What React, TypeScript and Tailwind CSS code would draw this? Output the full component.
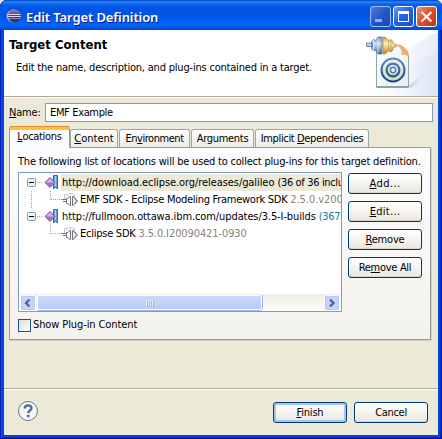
import type { ReactNode } from "react";

function Text({ children, className = "" }: { children: ReactNode; className?: string }) {
  return <span className={`block whitespace-pre leading-[14px] ${className}`}>{children}</span>;
}

function Key({ children }: { children: ReactNode }) {
  return <span className="underline decoration-1 underline-offset-1">{children}</span>;
}

function EclipseIcon() {
  return (
    <svg className="h-4 w-4" viewBox="0 0 16 16">
      <defs>
        <linearGradient id="ecl" x1="0" y1="0" x2="0" y2="1">
          <stop offset="0" stopColor="#8a86b8" />
          <stop offset=".45" stopColor="#4a4088" />
          <stop offset="1" stopColor="#332a6c" />
        </linearGradient>
      </defs>
      <ellipse cx="7.500" cy="8" rx="7" ry="6.500" fill="#b9a9c2" />
      <circle cx="8.500" cy="8" r="6.500" fill="url(#ecl)" />
      <path d="M1.500 6.500h13M1.300 8.500h13.600" stroke="#dcd6ea" strokeWidth="1" />
      <path d="M2 10.500h12" stroke="#8d84b4" strokeWidth="1" />
    </svg>
  );
}

function TargetBanner() {
  return (
    <svg className="h-[66px] w-[78px]" viewBox="0 0 78 66">
      <defs>
        <linearGradient id="swoosh" x1="0" y1="0" x2="1" y2="0">
          <stop offset="0" stopColor="#fff" />
          <stop offset=".55" stopColor="#edf2fb" />
          <stop offset="1" stopColor="#dce5f5" />
        </linearGradient>
        <linearGradient id="swoosh2" x1="0" y1="0" x2="1" y2="0">
          <stop offset="0" stopColor="#fff" />
          <stop offset=".65" stopColor="#f1f4fb" />
          <stop offset="1" stopColor="#e6ecf8" />
        </linearGradient>
        <linearGradient id="page" x1="0" y1="0" x2="1" y2="1">
          <stop offset="0" stopColor="#fff" />
          <stop offset="1" stopColor="#e6edf3" />
        </linearGradient>
        <linearGradient id="fold" x1="1" y1="0" x2="0" y2="1">
          <stop offset="0" stopColor="#e8893f" />
          <stop offset="1" stopColor="#fbd7a5" />
        </linearGradient>
        <linearGradient id="ring" x1="0" y1="0" x2="0" y2="1">
          <stop offset="0" stopColor="#5f8bc0" />
          <stop offset="1" stopColor="#163c8e" />
        </linearGradient>
        <linearGradient id="inner" x1="0" y1="0" x2="0" y2="1">
          <stop offset="0" stopColor="#e9f1f1" />
          <stop offset="1" stopColor="#d1dfb6" />
        </linearGradient>
        <linearGradient id="plugBlue" x1="0" y1="0" x2="0" y2="1">
          <stop offset="0" stopColor="#7395bb" />
          <stop offset=".4" stopColor="#d1e0ef" />
          <stop offset="1" stopColor="#39679d" />
        </linearGradient>
        <linearGradient id="plugGold" x1="0" y1="0" x2="0" y2="1">
          <stop offset="0" stopColor="#c9a343" />
          <stop offset=".4" stopColor="#fff2bd" />
          <stop offset="1" stopColor="#be7e24" />
        </linearGradient>
        <linearGradient id="pageShadow" x1="0" y1="0" x2="1" y2="0">
          <stop offset="0" stopColor="#c9c8d2" />
          <stop offset="1" stopColor="#e7ecf7" stopOpacity="0" />
        </linearGradient>
      </defs>
      <path d="M78 2C58 9 42 24 12 66h66z" fill="url(#swoosh2)" />
      <path d="M78 22C58 27 44 40 23 66h55z" fill="url(#swoosh)" />
      <path d="M48 57l21-20-3 10-15 11z" fill="url(#pageShadow)" />
      <path d="M16.500 15.500H38l10.500 10V57h-32z" fill="url(#page)" stroke="#8ba6a8" />
      <path d="M16.500 57h32" stroke="#547878" />
      <path d="M38 14.500c5 1 11 6 10.500 12-2-2-4-2.500-7-2C43 20 41 16 38 14.500z" fill="url(#fold)" stroke="#e69c56" strokeWidth=".6" />
      <circle cx="33" cy="40" r="12.500" fill="url(#ring)" />
      <circle cx="33" cy="40" r="9" fill="none" stroke="url(#inner)" strokeWidth="3" />
      <circle cx="33" cy="40" r="5.300" fill="url(#inner)" />
      <circle cx="33" cy="40" r="3.400" fill="#507cae" />
      <circle cx="33" cy="40" r="1.900" fill="#f6f8d8" />
      <path d="M6.500 13h6v3.500h-6zM11.500 12l2-2.500 2 1 2.500-3.500h4v17h-4L15.500 20l-2 1-2-2.500z" fill="url(#plugBlue)" stroke="#52779f" strokeWidth=".8" />
      <path d="M23 7h2l3.500 3.500 2.500-1 2 2v2.500h3v3h-3V20l-2 2-2.500-1L25 24h-2z" fill="url(#plugGold)" stroke="#b68a32" strokeWidth=".8" />
      <path d="M13.500 10v11M18 8v15" stroke="#eef7ff" strokeWidth=".7" />
      <path d="M28.500 11v9M31 10v11" stroke="#c69640" strokeWidth=".7" />
    </svg>
  );
}

function WindowControls() {
  return (
    <svg className="h-[21px] w-[67px]" viewBox="0 0 67 21">
      <defs>
        <linearGradient id="minBtn" x1="0" y1="0" x2="1" y2="1">
          <stop offset="0" stopColor="#557ee0" />
          <stop offset=".5" stopColor="#2457c9" />
          <stop offset="1" stopColor="#1848b0" />
        </linearGradient>
        <linearGradient id="maxBtn" x1="0" y1="0" x2="1" y2="1">
          <stop offset="0" stopColor="#719cf5" />
          <stop offset=".45" stopColor="#2663e4" />
          <stop offset="1" stopColor="#154fc4" />
        </linearGradient>
        <linearGradient id="closeBtn" x1="0" y1="0" x2="1" y2="1">
          <stop offset="0" stopColor="#ee9277" />
          <stop offset=".45" stopColor="#df5432" />
          <stop offset="1" stopColor="#b7320e" />
        </linearGradient>
      </defs>
      <rect x=".5" y=".5" width="20" height="20" rx="2.500" fill="url(#minBtn)" stroke="#9ebbf3" />
      <rect x="5" y="13" width="7" height="3" fill="#94aae7" />
      <rect x="23.500" y=".5" width="20" height="20" rx="2.500" fill="url(#maxBtn)" stroke="#fff" />
      <path d="M28 5h11v11H28zM29 8v7h9V8z" fill="#fff" fillRule="evenodd" />
      <rect x="46.500" y=".5" width="20" height="20" rx="2.500" fill="url(#closeBtn)" stroke="#fff" />
      <path d="M51.500 6l10 9.500M61.500 6l-10 9.500" stroke="#fff" strokeWidth="2.200" />
    </svg>
  );
}

function SiteIcon() {
  return (
    <svg className="h-[17px] w-4 shrink-0" viewBox="0 0 16 17">
      <path d="M9.500 1.500h4V15l-2-2-2 2z" fill="#62a2d7" stroke="#246fae" />
      <path d="M11.500 2v10" stroke="#a7d5f3" />
      <path d="M6 3.500l5 5-5 5-5-5z" fill="#a475ba" stroke="#8054a0" />
      <path d="M6 4.500l4 4H2z" fill="#d3b4e0" />
    </svg>
  );
}

function FeatureIcon() {
  return (
    <svg className="h-[17px] w-4 shrink-0" viewBox="0 0 16 17">
      <path d="M2.500 8V3.500h3l1-1h4l1 1h1V7" fill="#f5f6f9" stroke="#c5c8d0" />
      <path d="M0 8.500h4.500M1 10.500h3" stroke="#73777d" />
      <path d="M4.500 7.500h1.500l1.500-2h1v9h-1L6 12.500H4.500z" fill="#fff" stroke="#707479" />
      <path d="M10.500 5.500h1l1 2h1v1.500h1.500v2h-1.500v1.500h-1l-1 2h-1z" fill="#eeeff0" stroke="#707479" />
    </svg>
  );
}

function Expander() {
  return (
    <svg className="h-[17px] w-[9px] shrink-0" viewBox="0 0 9 17">
      <rect x=".5" y="4.500" width="8" height="8" rx="1" fill="#f2f1ea" stroke="#7898b5" />
      <path d="M2 8.500h5" stroke="#000" />
    </svg>
  );
}

function SiteRow({ selected = false, children }: { selected?: boolean; children: ReactNode }) {
  return (
    <div className="flex h-[17px] items-center pl-[7px]">
      <Expander />
      <span className="mr-0.5 ml-px h-px w-[5px] shrink-0 border-t border-dotted border-[#aaa795]" />
      <SiteIcon />
      <div className={`ml-px flex h-[17px] flex-1 items-center pl-px ${selected ? "bg-[#ece9d8]" : ""}`}>{children}</div>
    </div>
  );
}

function FeatureRow({ line = false, children }: { line?: boolean; children: ReactNode }) {
  return (
    <div className="flex h-[17px] pl-[11px]">
      <span className={`h-[17px] w-[19px] shrink-0 border-l border-dotted ${line ? "border-[#aaa795]" : "border-transparent"}`} />
      <span className="h-[9px] w-3 shrink-0 border-b border-l border-dotted border-[#aaa795]" />
      <FeatureIcon />
      <div className="ml-0.5 flex items-center">{children}</div>
    </div>
  );
}

function Button({ children, focused = false }: { children: ReactNode; focused?: boolean }) {
  return (
    <button
      className={`flex h-[21px] w-[74px] items-center justify-center rounded-[3px] border border-[#003c74] bg-linear-to-b from-white via-[#f5f4ef] to-[#e9e7df] ${
        focused ? "shadow-[inset_0_0_0_2px_#a9c3ef,inset_0_-2px_0_0_#7b9ce0]" : "shadow-[inset_0_-1px_0_#d8d2c4]"
      }`}
    >
      {children}
    </button>
  );
}

function Tab({ width, children }: { width: string; children: ReactNode }) {
  return (
    <div className={`flex h-[18px] justify-center rounded-t-[3px] border border-b-0 border-[#91a7b4] bg-linear-to-b from-white to-[#ecebe5] pt-0.5 ${width}`}>
      {children}
    </div>
  );
}

function ScrollArrow({ right = false }: { right?: boolean }) {
  return (
    <svg className="h-[16px] w-[16px] shrink-0" viewBox="0 0 16 16">
      <rect x=".5" y=".5" width="15" height="15" rx="2" fill="#c3d3fd" stroke="#fff" />
      <rect x="1.500" y="1.500" width="13" height="13" rx="1" fill="none" stroke="#b4c8f6" />
      <path d={right ? "M6 4.500L9.500 8 6 11.500" : "M9.500 4.500L6 8l3.500 3.500"} fill="none" stroke="#4d6185" strokeWidth="2.200" />
    </svg>
  );
}

function Scrollbar() {
  return (
    <div className="flex h-[17px] bg-linear-to-b from-[#eeede5] to-[#fefefb] pt-px">
      <ScrollArrow />
      <div className="ml-px flex h-[15px] w-[225px] items-center justify-center gap-px rounded-[2px] border border-white bg-linear-to-b from-[#c9d8fc] to-[#b9cdfb] shadow-[0_1px_0_#9eb6e5,1px_0_0_#9eb6e5]">
        {[0, 1, 2, 3].map((n) => (
          <span key={n} className="h-1.5 w-px bg-[#eef4fe] shadow-[1px_1px_0_#8cb0f8]" />
        ))}
      </div>
      <span className="flex-1" />
      <ScrollArrow right />
    </div>
  );
}

export default function App() {
  return (
    <div className="h-[439px] w-[442px] bg-[#ece9d8] font-['DejaVu_Sans_Condensed','DejaVu_Sans',sans-serif] text-[11px] text-black [font-stretch:condensed]">
      <div className="flex h-[439px] flex-col overflow-hidden rounded-t-[7px] bg-[#0046e0] shadow-[inset_1px_0_0_#001fb8,inset_-1px_0_0_#00138c,inset_0_-1px_0_#00138c,inset_2px_0_0_#0a50e8,inset_-2px_0_0_#0030c0,inset_0_-2px_0_#0030c0]">
        <header className="flex h-[30px] shrink-0 items-start bg-[linear-gradient(#0045c8_0,#2b84f8_2px,#0964ec_4px,#0054e3_8px,#0055e5_15px,#0064fa_23px,#0060f4_26px,#0046cc_30px)] pt-1.5 pr-[5px] pl-1.5">
          <div className="pt-[2px]"><EclipseIcon /></div>
          <h1 className="ml-1 flex-1 whitespace-pre font-[Noto_Sans] text-[13px] leading-[22px] font-semibold tracking-[-0.1px] text-white [text-shadow:1px_1px_#0a1883]">Edit Target Definition</h1>
          <WindowControls />
        </header>
        <main className="mx-1 mb-1 flex flex-1 flex-col bg-[#ece9d8]">
          <section className="flex h-[66px] shrink-0 bg-white">
            <div className="flex-1 pl-[5px]">
              <Text className="pt-2 text-[13px] font-bold">Target Content</Text>
              <Text className="pt-[9px] pl-[7px] tracking-[-0.2px]">Edit the name, description, and plug-ins contained in a target.</Text>
            </div>
            <TargetBanner />
          </section>
          <div className="h-0.5 shrink-0 border-t border-[#aca899] bg-white" />
          <div className="flex items-center pt-[5px] pl-[5px]">
            <Text className="w-9 tracking-[-0.2px]"><Key>N</Key>ame:</Text>
            <div className="flex h-[19px] w-[388px] items-center border border-[#7f9db9] bg-white pl-1">
              <Text className="tracking-[-0.35px]">EMF Example</Text>
            </div>
          </div>
          <div className="mt-[5px] flex h-5 items-end pl-[5px]">
            <div className="z-10 -mb-px flex h-[21px] w-[61px] justify-center rounded-t-[3px] border-x border-t-[3px] border-x-[#919b9c] border-t-[#ffc03c] bg-[#fcfcfe] shadow-[0_-1px_0_#e68b2c]">
              <Text className="tracking-[-0.3px]"><Key>L</Key>ocations</Text>
            </div>
            <Tab width="w-[48px]"><Text><Key>C</Key>ontent</Text></Tab>
            <Tab width="ml-px w-[71px]"><Text className="tracking-[-0.45px]">En<Key>v</Key>ironment</Text></Tab>
            <Tab width="ml-px w-[63px]"><Text className="tracking-[-0.3px]">Ar<Key>g</Key>uments</Text></Tab>
            <Tab width="ml-px w-[114px]"><Text className="tracking-[-0.36px]">Implicit <Key>D</Key>ependencies</Text></Tab>
          </div>
          <section className="ml-[5px] flex h-[193px] w-[422px] flex-col border border-[#919b9c] bg-linear-to-b from-[#fcfcfe] to-[#f3f2ed] px-2 shadow-[1px_1px_0_#d0cebf]">
            <Text className="pt-[7px] tracking-[-0.2px]">The following list of locations will be used to collect plug-ins for this target definition.</Text>
            <div className="mt-[3px] flex gap-1.5">
              <div className="flex h-[140px] w-[325px] flex-col overflow-hidden border border-[#7f9db9] bg-white px-px pt-px">
                <div className="flex-1">
                  <SiteRow selected><Text className="w-[280px] overflow-hidden tracking-[-0.08px]">http://download.eclipse.org/releases/galileo <span className="tracking-[-0.35px]">(36 of 36 inclu</span></Text></SiteRow>
                  <FeatureRow line><Text className="w-[261px] overflow-hidden tracking-[-0.27px]">EMF SDK - Eclipse Modeling Framework SDK <span className="tracking-[-0.05px] text-[#85827b]">2.5.0.v200</span></Text></FeatureRow>
                  <SiteRow><Text className="tracking-[-0.1px]">http://fullmoon.ottawa.ibm.com/updates/3.5-I-builds <span className="tracking-[-0.3px] text-[#127a9d]">(367</span></Text></SiteRow>
                  <FeatureRow><Text className="tracking-[-0.25px]">Eclipse SDK <span className="tracking-[-0.1px] text-[#85827b]">3.5.0.I20090421-0930</span></Text></FeatureRow>
                </div>
                <Scrollbar />
              </div>
              <div className="flex flex-col gap-[7px] pt-px">
                <Button><Text className="tracking-[0.4px]"><Key>A</Key>dd...</Text></Button>
                <Button><Text className="tracking-[0.3px]"><Key>E</Key>dit...</Text></Button>
                <Button><Text className="tracking-[-0.2px]"><Key>R</Key>emove</Text></Button>
                <Button><Text className="tracking-[-0.3px]">Re<Key>m</Key>ove All</Text></Button>
              </div>
            </div>
            <label className="mt-1.5 flex items-center gap-0.5">
              <span className="h-[13px] w-[13px] border border-[#1c5180] bg-linear-to-br from-[#dcdcd7] to-white" />
              <Text className="tracking-[-0.1px]">Show Plug-in Content</Text>
            </label>
          </section>
          <div className="mt-12 h-0.5 border-t border-[#aca899] bg-white" />
          <footer className="flex items-start pt-[10px] pl-3.5">
            <svg className="h-[22px] w-[22px]" viewBox="0 0 22 22">
              <circle cx="10" cy="11" r="9.500" fill="#f5f6f8" stroke="#65768f" />
              <path d="M6.700 8.500c0-4.200 6.800-4 6.800-.4 0 2.300-3.300 2.600-3.300 5" fill="none" stroke="#586b8a" strokeWidth="2.400" />
              <path d="M8.900 14.800h2.600v2.500H8.900z" fill="#586b8a" />
            </svg>
            <div className="ml-auto flex gap-[7px] pt-0.5 pr-2.5">
              <Button focused><Text className="tracking-[-0.2px]"><Key>F</Key>inish</Text></Button>
              <Button><Text className="tracking-[-0.3px]">Cancel</Text></Button>
            </div>
          </footer>
        </main>
      </div>
    </div>
  );
}
